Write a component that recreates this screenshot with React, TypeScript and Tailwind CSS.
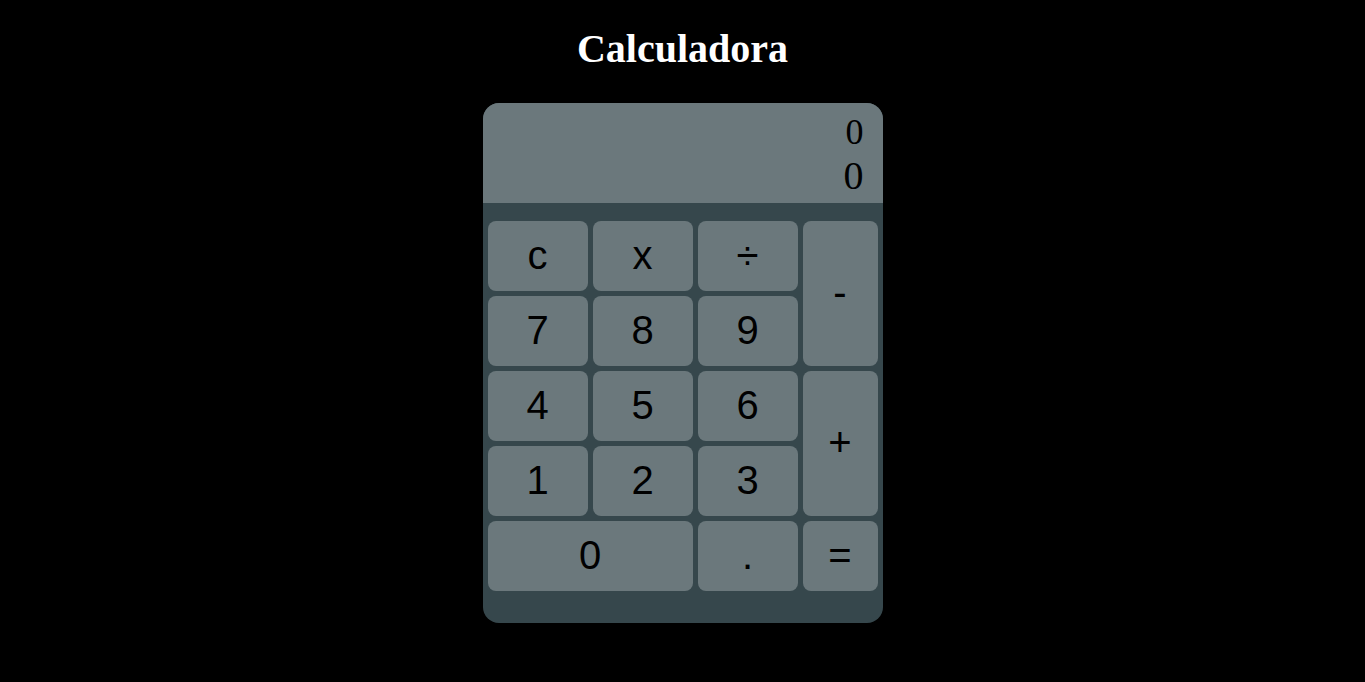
import { FC } from 'react';

type Key = { label: string; className?: string };

const KEYS: Key[] = [
  { label: 'c' },
  { label: 'x' },
  { label: '÷' },
  { label: '-', className: 'row-span-2' },
  { label: '7' },
  { label: '8' },
  { label: '9' },
  { label: '4' },
  { label: '5' },
  { label: '6' },
  { label: '+', className: 'row-span-2' },
  { label: '1' },
  { label: '2' },
  { label: '3' },
  { label: '0', className: 'col-span-2' },
  { label: '.' },
  { label: '=' },
];

const Display: FC<{ previous: string; current: string }> = ({
  previous,
  current,
}) => (
  <div className="flex h-[100px] flex-col items-end bg-[#6b787c] pt-[11px] pr-[19px] font-['Liberation_Serif',serif] text-black">
    <div className="text-[36px] leading-none">{previous}</div>
    <div className="mt-[6px] text-[40px] leading-none">{current}</div>
  </div>
);

export default function App() {
  return (
    <div className="flex min-h-screen flex-col items-center bg-black">
      <h1 className="mt-[29px] mb-[34px] font-['Liberation_Serif',serif] text-[40px] leading-none font-bold text-white">
        Calculadora
      </h1>
      <div className="w-[400px] overflow-hidden rounded-2xl bg-[#36474c]">
        <Display previous="0" current="0" />
        <div className="grid grid-cols-[100px_100px_100px_75px] grid-rows-[repeat(5,70px)] gap-[5px] px-[5px] pt-[18px] pb-[32px]">
          {KEYS.map(({ label, className }) => (
            <button
              key={label}
              className={`${className ?? ''} flex cursor-pointer items-center justify-center rounded-lg bg-[#6b787c] pb-[3px] font-['Liberation_Sans',Arial,sans-serif] text-[40px] text-black`}
            >
              {label}
            </button>
          ))}
        </div>
      </div>
    </div>
  );
}
